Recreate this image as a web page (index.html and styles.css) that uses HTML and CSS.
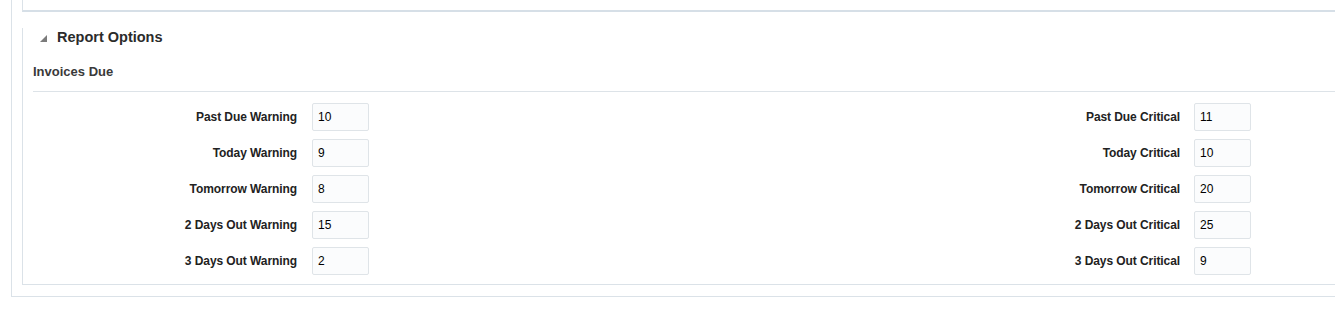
FILE: index.html
```html
<!DOCTYPE html>
<html>
<head>
<meta charset="utf-8">
<link rel="stylesheet" href="styles.css">
</head>
<body>
<div class="page">
  <div class="prev-panel"></div>
  <div class="section">
    <div class="section-header">
      <svg class="disclosure" width="7" height="7" viewBox="0 0 7 7"><polygon points="7,0 7,7 0,7"/></svg>
      <span class="section-title">Report Options</span>
    </div>
    <div class="subheader">Invoices Due</div>
    <div class="form">
      <div class="form-col">
        <label class="field-label">Past Due Warning</label><input class="field-input" type="text" value="10">
        <label class="field-label">Today Warning</label><input class="field-input" type="text" value="9">
        <label class="field-label">Tomorrow Warning</label><input class="field-input" type="text" value="8">
        <label class="field-label">2 Days Out Warning</label><input class="field-input" type="text" value="15">
        <label class="field-label">3 Days Out Warning</label><input class="field-input" type="text" value="2">
      </div>
      <div class="form-col form-col-right">
        <label class="field-label">Past Due Critical</label><input class="field-input" type="text" value="11">
        <label class="field-label">Today Critical</label><input class="field-input" type="text" value="10">
        <label class="field-label">Tomorrow Critical</label><input class="field-input" type="text" value="20">
        <label class="field-label">2 Days Out Critical</label><input class="field-input" type="text" value="25">
        <label class="field-label">3 Days Out Critical</label><input class="field-input" type="text" value="9">
      </div>
    </div>
  </div>
</div>
</body>
</html>
```
FILE: styles.css
```css
html, body {
  margin: 0;
  padding: 0;
  background: #ffffff;
}
body {
  font-family: "Liberation Sans", Arial, sans-serif;
  color: #333333;
  overflow: hidden;
}
.page {
  margin-left: 11px;
  border-left: 1px solid #dbe2e8;
  border-bottom: 1px solid #dbe2e8;
  padding: 0 0 11px 10px;
}
.prev-panel {
  height: 10px;
  border-left: 1px solid #dbe2e8;
  border-bottom: 2px solid #d6dfe7;
}
.section {
  border-left: 1px solid #dbe2e8;
  border-bottom: 1px solid #dbe2e8;
  padding: 0 0 9px 10px;
}
.section-header {
  display: flex;
  align-items: flex-start;
  margin-top: 16px;
  height: 18px;
}
.disclosure {
  display: block;
  margin: 7px 0 0 7px;
  fill: #7b7b7b;
}
.section-title {
  margin-left: 10px;
  font-size: 14.5px;
  line-height: 18px;
  font-weight: bold;
  color: #2b2b2b;
}
.subheader {
  margin-top: 17px;
  font-size: 13px;
  line-height: 17px;
  font-weight: bold;
  color: #3a3a3a;
  padding-bottom: 11px;
  border-bottom: 1px solid #dde3e8;
}
.form {
  display: flex;
  gap: 547px;
  margin-top: 11px;
}
.form-col {
  display: grid;
  grid-template-columns: 264px 57px;
  column-gap: 15px;
  row-gap: 8px;
  align-items: center;
}
.form-col-right {
  column-gap: 14px;
}
.field-label {
  text-align: right;
  font-size: 12px;
  letter-spacing: -0.08px;
  font-weight: bold;
  color: #222222;
}
.field-input {
  box-sizing: border-box;
  width: 57px;
  height: 28px;
  margin: 0;
  padding: 0 5px;
  border: 1px solid #dfe4e8;
  border-radius: 2px;
  background: #fbfcfd;
  font-family: "Liberation Sans", Arial, sans-serif;
  font-size: 12px;
  color: #000000;
  outline: none;
}
```
